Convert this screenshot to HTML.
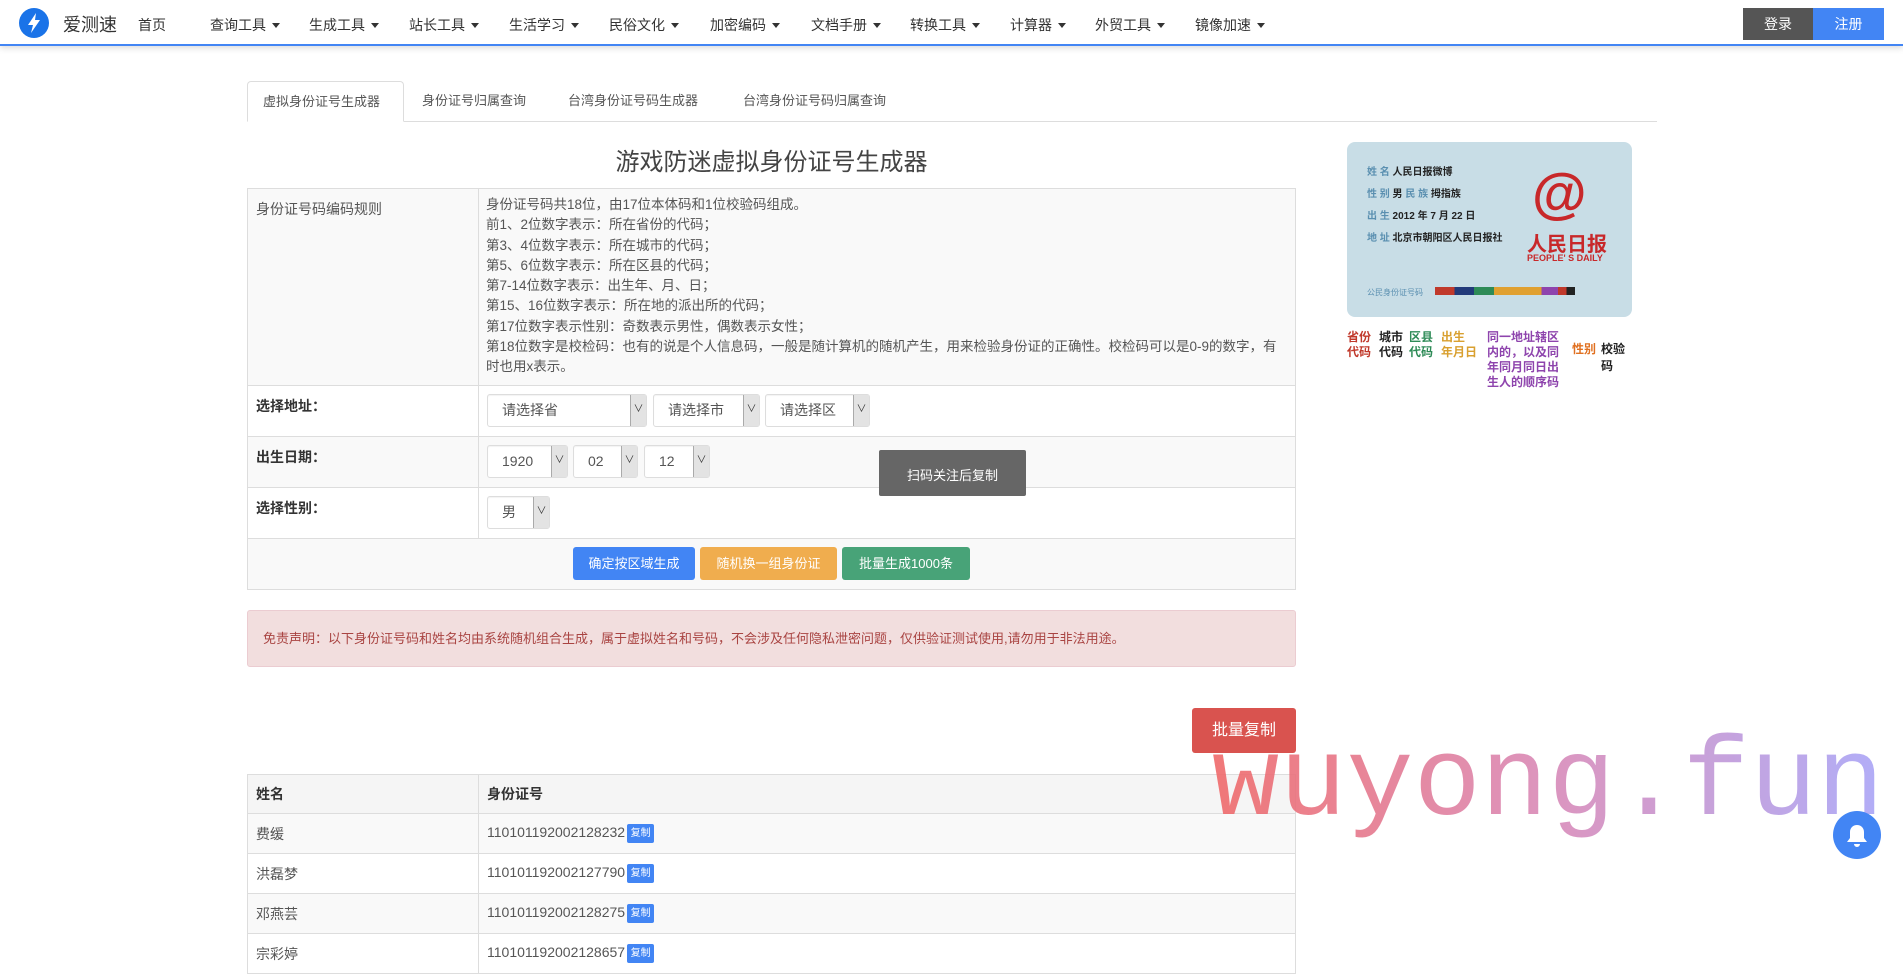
<!DOCTYPE html>
<html><head><meta charset="utf-8">
<style>
*{box-sizing:border-box;margin:0;padding:0}
body{width:1903px;height:948px;overflow:hidden;background:#fff;font-family:"Liberation Sans","Noto Sans CJK SC",sans-serif;font-size:14px;color:#555;position:relative}
.abs{position:absolute}
.nav{position:absolute;left:0;top:0;width:1903px;height:46px;background:#fff;border-bottom:2px solid #4285f4;box-shadow:0 2px 6px rgba(0,0,0,.15)}
.nav span.i{position:absolute;top:15px;font-size:14px;color:#333}
.caret{display:inline-block;width:0;height:0;border-left:4px solid transparent;border-right:4px solid transparent;border-top:5px solid #333;margin-left:6px;vertical-align:2px}
.tabs{position:absolute;left:247px;top:121px;width:1410px;border-top:1px solid #ddd}
.tab{position:absolute;top:81px;height:41px;line-height:40px;font-size:13px;color:#555}
.tab.a{border:1px solid #ddd;border-bottom:1px solid #fff;border-radius:4px 4px 0 0;background:#fff;padding:0 15px}
table{border-collapse:collapse}
td,th{border:1px solid #ddd;vertical-align:top;text-align:left}
.sel{position:absolute;height:33px;border:1px solid #ddd;border-radius:3px;background:#fff;font-size:14px;color:#555;line-height:31px;padding-left:14px;box-shadow:inset 0 1px 1px rgba(0,0,0,.05)}
.sel i{position:absolute;right:0;top:0;width:16px;height:31px;background:#e3e3e3;border-left:1px solid #aaa;font-style:normal;font-size:10px;text-align:center;line-height:30px;color:#333}
.btn{position:absolute;top:547px;height:33px;line-height:33px;color:#fff;text-align:center;font-size:13px;border-radius:3px}
.cp{display:inline-block;width:27px;height:19px;line-height:19px;background:#4285f4;color:#fff;font-size:10px;text-align:center;border-radius:2px;vertical-align:1px;margin-left:2px}
.rt td{vertical-align:middle;padding:0 8px}
</style></head><body>
<div class="nav">
 <div class="abs" style="left:19px;top:8px;width:30px;height:30px;border-radius:50%;background:#1a73e8"><svg width="30" height="30" viewBox="0 0 30 30"><path d="M17 5 L9 17 H14 L12 25 L21 12 H16 Z" fill="#fff"/></svg></div>
 <span class="i" style="left:63px;top:11px;font-size:18px;color:#333">爱测速</span>
 <span class="i" style="left:138px">首页</span>
 <span class="i" style="left:210px">查询工具<b class="caret"></b></span>
 <span class="i" style="left:309px">生成工具<b class="caret"></b></span>
 <span class="i" style="left:409px">站长工具<b class="caret"></b></span>
 <span class="i" style="left:509px">生活学习<b class="caret"></b></span>
 <span class="i" style="left:609px">民俗文化<b class="caret"></b></span>
 <span class="i" style="left:710px">加密编码<b class="caret"></b></span>
 <span class="i" style="left:811px">文档手册<b class="caret"></b></span>
 <span class="i" style="left:910px">转换工具<b class="caret"></b></span>
 <span class="i" style="left:1010px">计算器<b class="caret"></b></span>
 <span class="i" style="left:1095px">外贸工具<b class="caret"></b></span>
 <span class="i" style="left:1195px">镜像加速<b class="caret"></b></span>
 <div class="abs" style="left:1743px;top:8px;width:70px;height:32px;background:#555;color:#fff;text-align:center;line-height:32px">登录</div>
 <div class="abs" style="left:1813px;top:8px;width:71px;height:32px;background:#4285f4;color:#fff;text-align:center;line-height:32px">注册</div>
</div>

<div class="tabs"></div>
<div class="tab a" style="left:247px;width:157px">虚拟身份证号生成器</div>
<div class="tab" style="left:422px">身份证号归属查询</div>
<div class="tab" style="left:568px">台湾身份证号码生成器</div>
<div class="tab" style="left:743px">台湾身份证号码归属查询</div>

<div class="abs" style="left:247px;width:1049px;top:142px;text-align:center;font-size:24px;color:#444">游戏防迷虚拟身份证号生成器</div>

<table class="abs" style="left:247px;top:188px;width:1049px">
<tr style="background:#f9f9f9;height:197px"><td style="width:231px;padding:10px 8px">身份证号码编码规则</td><td style="padding:6px 7px;line-height:20.3px;font-size:13.5px">身份证号码共18位，由17位本体码和1位校验码组成。<br>前1、2位数字表示：所在省份的代码；<br>第3、4位数字表示：所在城市的代码；<br>第5、6位数字表示：所在区县的代码；<br>第7-14位数字表示：出生年、月、日；<br>第15、16位数字表示：所在地的派出所的代码；<br>第17位数字表示性别：奇数表示男性，偶数表示女性；<br>第18位数字是校检码：也有的说是个人信息码，一般是随计算机的随机产生，用来检验身份证的正确性。校检码可以是0-9的数字，有时也用x表示。</td></tr>
<tr style="height:51px"><td style="padding:10px 8px;font-weight:bold;color:#333">选择地址：</td><td></td></tr>
<tr style="height:51px;background:#f9f9f9"><td style="padding:10px 8px;font-weight:bold;color:#333">出生日期：</td><td></td></tr>
<tr style="height:51px"><td style="padding:10px 8px;font-weight:bold;color:#333">选择性别：</td><td></td></tr>
<tr style="height:51px;background:#f9f9f9"><td colspan="2"></td></tr>
</table>

<div class="sel" style="left:487px;top:394px;width:160px">请选择省<i>∨</i></div>
<div class="sel" style="left:653px;top:394px;width:107px">请选择市<i>∨</i></div>
<div class="sel" style="left:765px;top:394px;width:105px">请选择区<i>∨</i></div>
<div class="sel" style="left:487px;top:445px;width:81px">1920<i>∨</i></div>
<div class="sel" style="left:573px;top:445px;width:65px">02<i>∨</i></div>
<div class="sel" style="left:644px;top:445px;width:66px">12<i>∨</i></div>
<div class="sel" style="left:487px;top:496px;width:63px">男<i>∨</i></div>
<div class="abs" style="left:879px;top:450px;width:147px;height:46px;background:#666;color:#fff;font-size:13px;text-align:center;line-height:52px;border-radius:2px">扫码关注后复制</div>

<div class="btn" style="left:573px;width:122px;background:#4285f4">确定按区域生成</div>
<div class="btn" style="left:700px;width:137px;background:#f0ad4e">随机换一组身份证</div>
<div class="btn" style="left:842px;width:128px;background:#48a378">批量生成1000条</div>

<div class="abs" style="left:247px;top:610px;width:1049px;height:57px;background:#f2dede;border:1px solid #ebccd1;border-radius:3px;color:#a94442;font-size:13px;line-height:55px;padding-left:15px">免责声明：以下身份证号码和姓名均由系统随机组合生成，属于虚拟姓名和号码，不会涉及任何隐私泄密问题，仅供验证测试使用,请勿用于非法用途。</div>

<div class="abs" style="left:1192px;top:708px;width:104px;height:45px;background:#d9534f;border-radius:3px;color:#fff;font-size:16px;text-align:center;line-height:45px">批量复制</div>

<table class="abs rt" style="left:247px;top:774px;width:1049px;font-size:14px">
<tr style="height:37px;background:#f5f5f5"><th style="width:231px;padding:9px 8px;color:#333">姓名</th><th style="padding:9px 8px;color:#333">身份证号</th></tr>
<tr style="height:40px;background:#f9f9f9"><td>费缓</td><td>110101192002128232<span class="cp">复制</span></td></tr>
<tr style="height:40px"><td>洪磊梦</td><td>110101192002127790<span class="cp">复制</span></td></tr>
<tr style="height:40px;background:#f9f9f9"><td>邓燕芸</td><td>110101192002128275<span class="cp">复制</span></td></tr>
<tr style="height:40px"><td>宗彩婷</td><td>110101192002128657<span class="cp">复制</span></td></tr>
</table>

<div class="abs" style="left:1347px;top:140px;width:285px;height:254px;background:#fff">
 <div class="abs" style="left:0;top:2px;width:285px;height:175px;background:#c8dde6;border-radius:8px"></div>
 <div class="abs" style="left:20px;top:22px;font-size:10px;font-weight:bold;color:#222;line-height:22px"><span style="color:#5a8fb0">姓 名</span> 人民日报微博<br><span style="color:#5a8fb0">性 别</span> 男 <span style="color:#5a8fb0">民 族</span> 拇指族<br><span style="color:#5a8fb0">出 生</span> 2012 年 7 月 22 日<br><span style="color:#5a8fb0">地 址</span> 北京市朝阳区人民日报社</div>
 <div class="abs" style="left:185px;top:25px;font-size:56px;font-weight:bold;color:#c8282a;line-height:56px">@</div>
 <div class="abs" style="left:180px;top:88px;font-size:20px;font-weight:bold;color:#c8282a">人民日报</div>
 <div class="abs" style="left:180px;top:113px;font-size:9px;font-weight:bold;color:#c8282a">PEOPLE' S DAILY</div>
 <div class="abs" style="left:20px;top:147px;font-size:8px;color:#5a8fb0">公民身份证号码</div>
 <div class="abs" style="left:88px;top:147px;height:8px;width:140px;background:linear-gradient(90deg,#c0392b 0 14%,#223a7a 14% 28%,#2e8b57 28% 42%,#e0a030 42% 76%,#8e44ad 76% 88%,#c0392b 88% 94%,#222 94%)"></div>
 <div class="abs" style="left:0;top:190px;font-size:12px;font-weight:bold;line-height:15px;color:#c0392b">省份<br>代码</div>
 <div class="abs" style="left:32px;top:190px;font-size:12px;font-weight:bold;line-height:15px;color:#222">城市<br>代码</div>
 <div class="abs" style="left:62px;top:190px;font-size:12px;font-weight:bold;line-height:15px;color:#2e8b57">区县<br>代码</div>
 <div class="abs" style="left:94px;top:190px;font-size:12px;font-weight:bold;line-height:15px;color:#d9a030">出生<br>年月日</div>
 <div class="abs" style="left:140px;top:190px;font-size:12px;font-weight:bold;line-height:15px;color:#8e44ad">同一地址辖区<br>内的，以及同<br>年同月同日出<br>生人的顺序码</div>
 <div class="abs" style="left:225px;top:200px;font-size:12px;font-weight:bold;color:#e07020">性别</div>
 <div class="abs" style="left:254px;top:200px;font-size:12px;font-weight:bold;color:#222">校验码</div>
</div>

<div class="abs" style="left:1212px;top:715px;font-family:'Liberation Mono',monospace;font-size:112px;line-height:140px;background:linear-gradient(90deg,#f06a6a,#d98ab8 50%,#a9a6f8);-webkit-background-clip:text;background-clip:text;color:transparent;opacity:.9">wuyong.fun</div>

<div class="abs" style="left:1833px;top:811px;width:48px;height:48px;border-radius:50%;background:#4285f4"><svg width="48" height="48" viewBox="0 0 48 48"><path d="M24 14c-4 0-7 3-7 7v6l-3 4h20l-3-4v-6c0-4-3-7-7-7z M21 33a3 3 0 0 0 6 0z" fill="#fff"/></svg></div>
</body></html>
